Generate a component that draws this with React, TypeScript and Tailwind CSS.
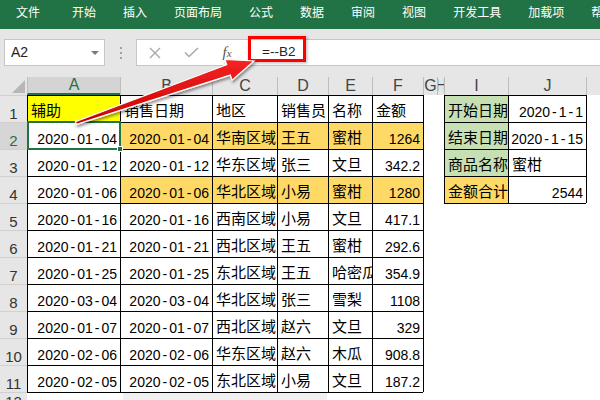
import React from 'react';

const DATA: string[][] = [
  ['2020-01-04', '2020-01-04', '华南区域', '王五', '蜜柑', '1264'],
  ['2020-01-12', '2020-01-12', '华东区域', '张三', '文旦', '342.2'],
  ['2020-01-06', '2020-01-06', '华北区域', '小易', '蜜柑', '1280'],
  ['2020-01-16', '2020-01-16', '西南区域', '小易', '文旦', '417.1'],
  ['2020-01-21', '2020-01-21', '西北区域', '王五', '蜜柑', '292.6'],
  ['2020-01-25', '2020-01-25', '东北区域', '王五', '哈密瓜', '354.9'],
  ['2020-03-04', '2020-03-04', '华北区域', '张三', '雪梨', '1108'],
  ['2020-01-07', '2020-01-07', '西北区域', '赵六', '文旦', '329'],
  ['2020-02-06', '2020-02-06', '华东区域', '赵六', '木瓜', '908.8'],
  ['2020-02-05', '2020-02-05', '东北区域', '小易', '文旦', '187.2'],
];
const HEAD = ['辅助', '销售日期', '地区', '销售员', '名称', '金额'];
const SIDE: [string, string, string][] = [
  ['开始日期', '2020-1-1', 'bg-[#c6e0b4]'],
  ['结束日期', '2020-1-15', 'bg-[#c6e0b4]'],
  ['商品名称', '蜜柑', 'bg-[#c6e0b4]'],
  ['金额合计', '2544', 'bg-[#ffd966]'],
];
const COLS = ['A', 'B', 'C', 'D', 'E', 'F', 'G', 'H', 'I', 'J', ''];
const TABS = ['文件', '开始', '插入', '页面布局', '公式', '数据', '审阅', '视图', '开发工具', '加载项', '帮助'];

function renderText(t: string) {
  if (/^\d+-\d+-\d+$/.test(t)) {
    const parts = t.split('-');
    return parts.map((p, i) => (
      <React.Fragment key={i}>
        {i > 0 && <span className="mx-[2px]">-</span>}
        {p}
      </React.Fragment>
    ));
  }
  return t;
}

function Cell({ text, bg = 'bg-white', extra = '' }: { text: string; bg?: string; extra?: string }) {
  const numeric = /^[\d.\-]+$/.test(text);
  const size = numeric ? 'text-[14px] pb-[1px] justify-end' : 'text-[15px] pb-[3px] justify-start';
  return (
    <div
      className={`flex items-end overflow-hidden whitespace-nowrap px-[3px] leading-[17px] border-l border-t border-black ${size} ${bg} ${extra}`}
    >
      {renderText(text)}
    </div>
  );
}

function Blank({ extra = '' }: { extra?: string }) {
  return <div className={`bg-white ${extra}`} />;
}

function RowHead({ n, sel = false }: { n: number; sel?: boolean }) {
  return (
    <div
      className={`flex items-end justify-center text-[15px] leading-[17px] border-t border-[#d0d0d0] ${
        sel ? 'bg-[#d6d6d6] text-[#217346]' : 'bg-[#e6e6e6] text-[#333]'
      }`}
    >
      {n}
    </div>
  );
}

export default function App() {
  const cells: React.ReactNode[] = [];
  cells.push(
    <div key="corner" className="bg-[#e6e6e6] flex items-end justify-end pr-[2px] pb-[2px]">
      <svg width="13" height="13" viewBox="0 0 13 13">
        <polygon points="13,0 13,13 0,13" fill="#b7b7b7" />
      </svg>
    </div>
  );
  COLS.forEach((c, i) => {
    cells.push(
      <div
        key={'h' + i}
        className={`flex items-center justify-center overflow-hidden whitespace-nowrap text-[16px] border-l border-[#bdbdbd] ${
          i === 0 ? 'bg-[#d4d4d4] text-[#217346] border-b-2 border-b-[#217346]' : 'bg-[#e6e6e6] text-[#444]'
        }`}
      >
        {c}
      </div>
    );
  });

  for (let r = 0; r < 11; r++) {
    cells.push(<RowHead key={'r' + r} n={r + 1} sel={r === 1} />);
    const vals = r === 0 ? HEAD : DATA[r - 1];
    vals.forEach((v, c) => {
      let bg = 'bg-white';
      if (r === 0 && c === 0) bg = 'bg-[#ffff00]';
      if ((r === 1 || r === 3) && c > 0) bg = 'bg-[#ffd966]';
      cells.push(<Cell key={`c${r}-${c}`} text={v} bg={bg} />);
    });
    cells.push(<Blank key={`g${r}`} extra="border-l border-black" />);
    cells.push(<Blank key={`hh${r}`} />);
    if (r < 4) {
      const s = SIDE[r];
      cells.push(<Cell key={`i${r}`} text={s[0]} bg={s[2]} />);
      cells.push(<Cell key={`j${r}`} text={s[1]} />);
      cells.push(<Blank key={`k${r}`} extra="border-l border-black" />);
    } else {
      cells.push(<Blank key={`i${r}`} extra={r === 4 ? 'border-t border-black' : ''} />);
      cells.push(<Blank key={`j${r}`} extra={r === 4 ? 'border-t border-black' : ''} />);
      cells.push(<Blank key={`k${r}`} />);
    }
  }
  cells.push(<RowHead key="r12" n={12} />);
  for (let c = 0; c < 11; c++) {
    cells.push(<Blank key={`z${c}`} extra={c < 6 ? 'border-t border-black' : ''} />);
  }

  return (
    <div className="relative w-[600px] h-[400px] overflow-hidden bg-white font-['Liberation_Sans','Noto_Sans_CJK_SC',sans-serif] text-black">
      {/* ribbon tabs */}
      <div className="h-[29px] bg-[#217346] flex items-center pl-[16px] pb-[3px] text-white text-[12px] leading-[16px] whitespace-nowrap gap-[27px]">
        {TABS.map((t, i) => (
          <span key={t} className={i === 0 ? 'mr-[5px]' : ''}>
            {t}
          </span>
        ))}
      </div>

      {/* formula bar */}
      <div className="h-[48px] bg-[#e6e6e6] flex items-start pt-[10px]">
        <div className="ml-[4px] w-[101px] h-[27px] bg-white border border-[#c6c6c6] flex items-center justify-between pl-[6px] pr-[5px]">
          <span className="text-[14px] text-[#222]">A2</span>
          <span className="w-0 h-0 border-l-[4px] border-r-[4px] border-t-[4px] border-l-transparent border-r-transparent border-t-[#7a7a7a]" />
        </div>
        <div className="w-[31px] h-[27px] flex flex-col items-center justify-center gap-[3px]">
          <span className="w-[2px] h-[2px] bg-[#a0a0a0]" />
          <span className="w-[2px] h-[2px] bg-[#a0a0a0]" />
          <span className="w-[2px] h-[2px] bg-[#a0a0a0]" />
        </div>
        <div className="flex-1 h-[27px] bg-white border border-r-0 border-[#c6c6c6] flex items-center">
          <div className="w-[36px] flex justify-center">
            <svg width="12" height="12" viewBox="0 0 12 12">
              <path d="M1 1 L11 11 M11 1 L1 11" stroke="#a8a8a8" strokeWidth="1.4" fill="none" />
            </svg>
          </div>
          <div className="w-[36px] flex justify-center">
            <svg width="15" height="11" viewBox="0 0 15 11">
              <path d="M1 5.5 L5 9.5 L14 1" stroke="#a8a8a8" strokeWidth="1.5" fill="none" />
            </svg>
          </div>
          <div className="w-[36px] flex justify-center">
            <span className="font-['Liberation_Serif',serif] italic text-[15px] text-[#555] leading-none">
              f<span className="text-[11px]">x</span>
            </span>
          </div>
          <span className="pl-[17px] text-[13.5px] text-[#222]">=--B2</span>
        </div>
      </div>

      {/* sheet */}
      <div className="grid grid-cols-[27px_93px_92px_65px_51px_44px_51px_14px_7px_64px_78px_1fr] grid-rows-[18px_repeat(11,27px)_18px]">
        {cells}
      </div>

      {/* selection */}
      <div className="absolute left-[27px] top-[121px] w-[94px] h-[29px] border-2 border-[#217346]" />
      <div className="absolute left-[117px] top-[146px] w-[6px] h-[6px] bg-[#217346] border border-white" />

      {/* grey strip at bottom */}
      <div className="absolute left-[123px] top-[393px] w-[204px] h-[7px] bg-[#f0f0f0]" />

      {/* red highlight box */}
      <div className="absolute left-[248px] top-[36px] w-[58px] h-[26px] border-[3px] border-[#ff0000] shadow-[1px_1px_3px_rgba(0,0,0,0.3)]" />

      {/* arrow */}
      <svg className="absolute left-0 top-0 pointer-events-none" width="600" height="400" viewBox="0 0 600 400">
        <defs>
          <linearGradient id="ag" x1="0" y1="0" x2="0.15" y2="1">
            <stop offset="0" stopColor="#ff2a2a" />
            <stop offset="1" stopColor="#c40000" />
          </linearGradient>
          <filter id="sh" x="-10%" y="-10%" width="130%" height="150%">
            <feDropShadow dx="1" dy="2" stdDeviation="1.5" floodColor="#000" floodOpacity="0.45" />
          </filter>
        </defs>
        <polygon
          points="75.5,121.6 226.7,64.7 224.9,59.5 254,61 232.1,80.3 230.3,75.1 76.5,124.4"
          fill="url(#ag)"
          stroke="#ffffff"
          strokeWidth="1.2"
          strokeLinejoin="miter"
          filter="url(#sh)"
        />
      </svg>
    </div>
  );
}
